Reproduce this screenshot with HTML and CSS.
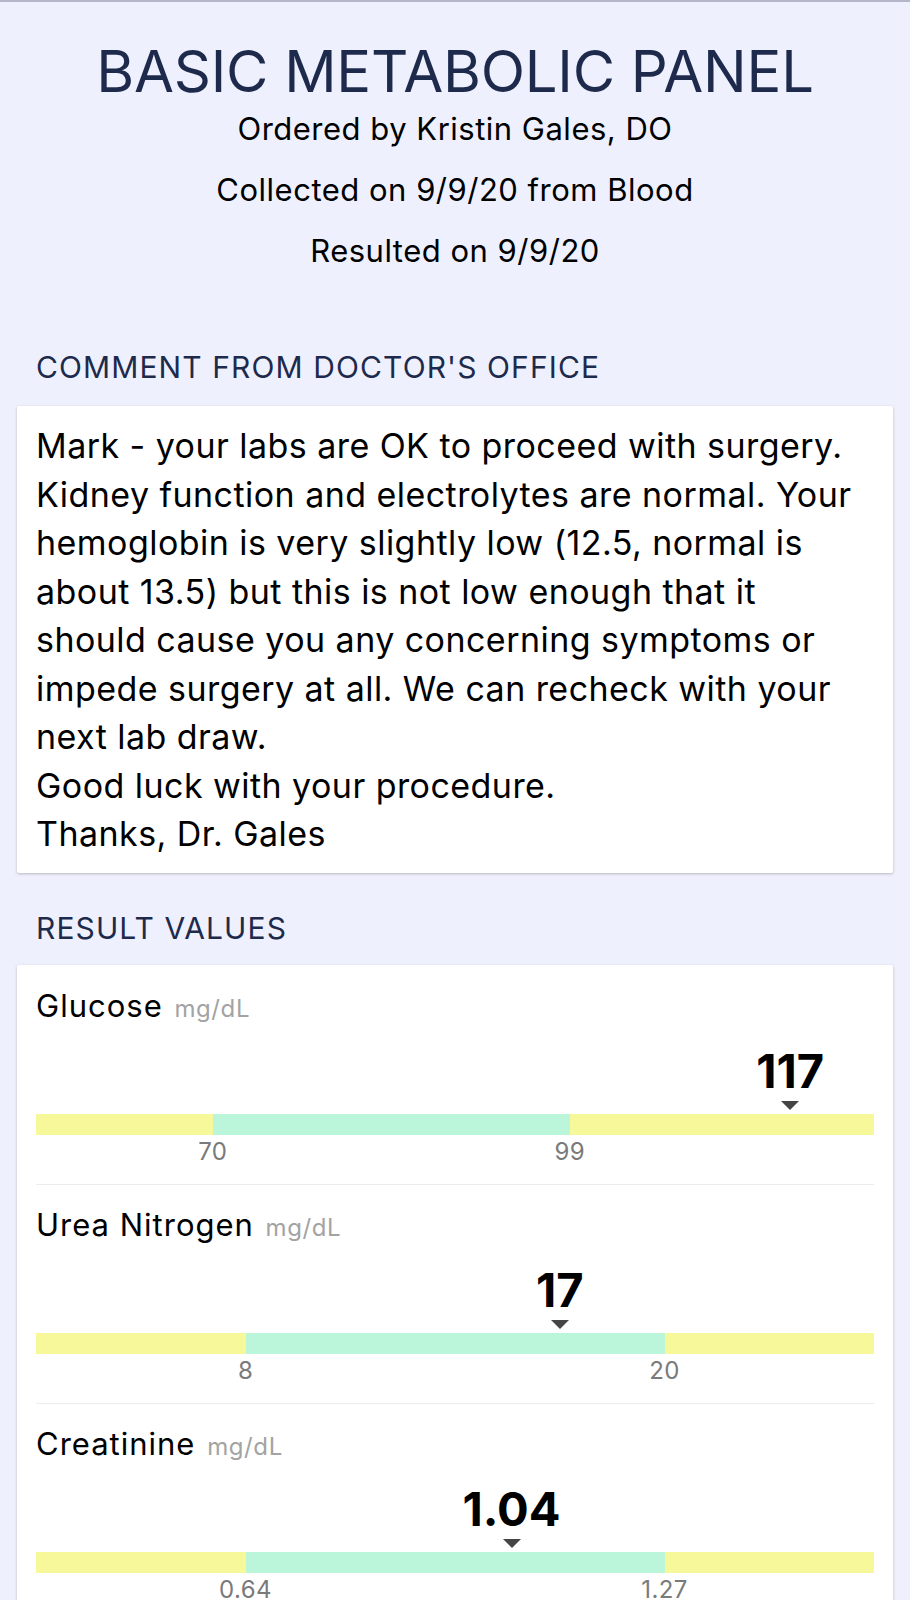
FILE: index.html
```html
<!DOCTYPE html>
<html lang="en">
<head>
<meta charset="utf-8">
<title>Basic Metabolic Panel</title>
<link rel="stylesheet" href="styles.css">
</head>
<body>
<div class="page">
  <header class="head">
    <h1 class="title">BASIC METABOLIC PANEL</h1>
    <p class="meta">Ordered by Kristin Gales, DO</p>
    <p class="meta">Collected on 9/9/20 from Blood</p>
    <p class="meta">Resulted on 9/9/20</p>
  </header>

  <h2 class="section-title section-title--first">COMMENT FROM DOCTOR'S OFFICE</h2>
  <div class="card comment">
    <p class="comment-text">Mark - your labs are OK to proceed with surgery.<br>Kidney function and electrolytes are normal. Your<br>hemoglobin is very slightly low (12.5, normal is<br>about 13.5) but this is not low enough that it<br>should cause you any concerning symptoms or<br>impede surgery at all. We can recheck with your<br>next lab draw.<br>Good luck with your procedure.<br>Thanks, Dr. Gales</p>
  </div>

  <h2 class="section-title">RESULT VALUES</h2>
  <div class="card results">
    <div class="result">
      <div class="result-name">Glucose <span class="unit">mg/dL</span></div>
      <div class="marker-row">
        <div class="marker" style="margin-left: 90%"><span class="value">117</span><span class="tri"></span></div>
      </div>
      <div class="bar">
        <span class="seg seg--warn" style="width: 21.1%"></span>
        <span class="seg seg--ok" style="width: 42.6%"></span>
        <span class="seg seg--warn seg--fill"></span>
      </div>
      <div class="ticks">
        <div class="tick" style="margin-left: 21.1%"><span>70</span></div>
        <div class="tick" style="margin-left: 42.6%"><span>99</span></div>
      </div>
    </div>

    <div class="result">
      <div class="result-name">Urea Nitrogen <span class="unit">mg/dL</span></div>
      <div class="marker-row">
        <div class="marker" style="margin-left: 62.5%"><span class="value">17</span><span class="tri"></span></div>
      </div>
      <div class="bar">
        <span class="seg seg--warn" style="width: 25%"></span>
        <span class="seg seg--ok" style="width: 50%"></span>
        <span class="seg seg--warn seg--fill"></span>
      </div>
      <div class="ticks">
        <div class="tick" style="margin-left: 25%"><span>8</span></div>
        <div class="tick" style="margin-left: 50%"><span>20</span></div>
      </div>
    </div>

    <div class="result">
      <div class="result-name">Creatinine <span class="unit">mg/dL</span></div>
      <div class="marker-row">
        <div class="marker" style="margin-left: 56.75%"><span class="value">1.04</span><span class="tri"></span></div>
      </div>
      <div class="bar">
        <span class="seg seg--warn" style="width: 25%"></span>
        <span class="seg seg--ok" style="width: 50%"></span>
        <span class="seg seg--warn seg--fill"></span>
      </div>
      <div class="ticks">
        <div class="tick" style="margin-left: 25%"><span>0.64</span></div>
        <div class="tick" style="margin-left: 50%"><span>1.27</span></div>
      </div>
    </div>
  </div>
</div>
</body>
</html>
```
FILE: styles.css
```css
* { box-sizing: border-box; }

html, body {
  margin: 0;
  padding: 0;
}

body {
  background: #eef1fd;
  font-family: "Inter", "Noto Sans", "Liberation Sans", sans-serif;
  color: #000;
  border-top: 2px solid #b4b8c9;
}

.page {
  padding: 0 17px 40px;
}

.head {
  text-align: center;
  padding-top: 43px;
}

.title {
  margin: 0;
  font-size: 58px;
  line-height: 53px;
  font-weight: 400;
  color: #1e2a4c;
  letter-spacing: -0.25px;
}

.meta {
  margin: 0;
  font-size: 31px;
  line-height: 61px;
  letter-spacing: 0.5px;
  color: #000;
}

.section-title {
  margin: 35px 0 17px 19px;
  font-size: 30px;
  line-height: 40px;
  font-weight: 400;
  letter-spacing: 1.1px;
  color: #1e2a4c;
}

.section-title--first {
  margin-top: 66px;
  margin-bottom: 19px;
}

.card {
  background: #fff;
  border-radius: 2px;
  box-shadow: 0 1px 3px rgba(0, 0, 0, 0.24);
}

.comment {
  padding: 16px 19px 14px;
}

.comment-text {
  margin: 0;
  font-size: 34px;
  line-height: 48.5px;
  letter-spacing: 0.45px;
  white-space: nowrap;
}

.results {
  padding: 21px 19px 0;
}

.result {
  padding-bottom: 19px;
  border-bottom: 1px solid #ececec;
  margin-bottom: 20px;
}

.result-name {
  font-size: 31px;
  line-height: 40px;
  letter-spacing: 1px;
}

.unit {
  font-size: 24px;
  letter-spacing: 0.6px;
  margin-left: 2px;
  color: #a3a3a3;
}

.marker-row {
  display: flex;
  margin-top: 20px;
  height: 65px;
}

.marker {
  width: 0;
  display: flex;
  flex-direction: column;
  align-items: center;
}

.value {
  font-size: 47px;
  line-height: 44px;
  font-weight: 700;
  white-space: nowrap;
}

.tri {
  margin-top: 8px;
  width: 0;
  height: 0;
  border-left: 9px solid transparent;
  border-right: 9px solid transparent;
  border-top: 9px solid #454545;
}

.bar {
  display: flex;
  height: 21px;
}

.seg { display: block; height: 100%; }
.seg--warn { background: #f7f899; }
.seg--ok { background: #bbf6da; }
.seg--fill { flex: 1; }

.ticks {
  display: flex;
  height: 26px;
  margin-top: 4px;
}

.tick {
  width: 0;
  display: flex;
  justify-content: center;
  font-size: 24px;
  line-height: 26px;
  letter-spacing: 0.4px;
  color: #7a7a7a;
}

.tick span { white-space: nowrap; }
```
